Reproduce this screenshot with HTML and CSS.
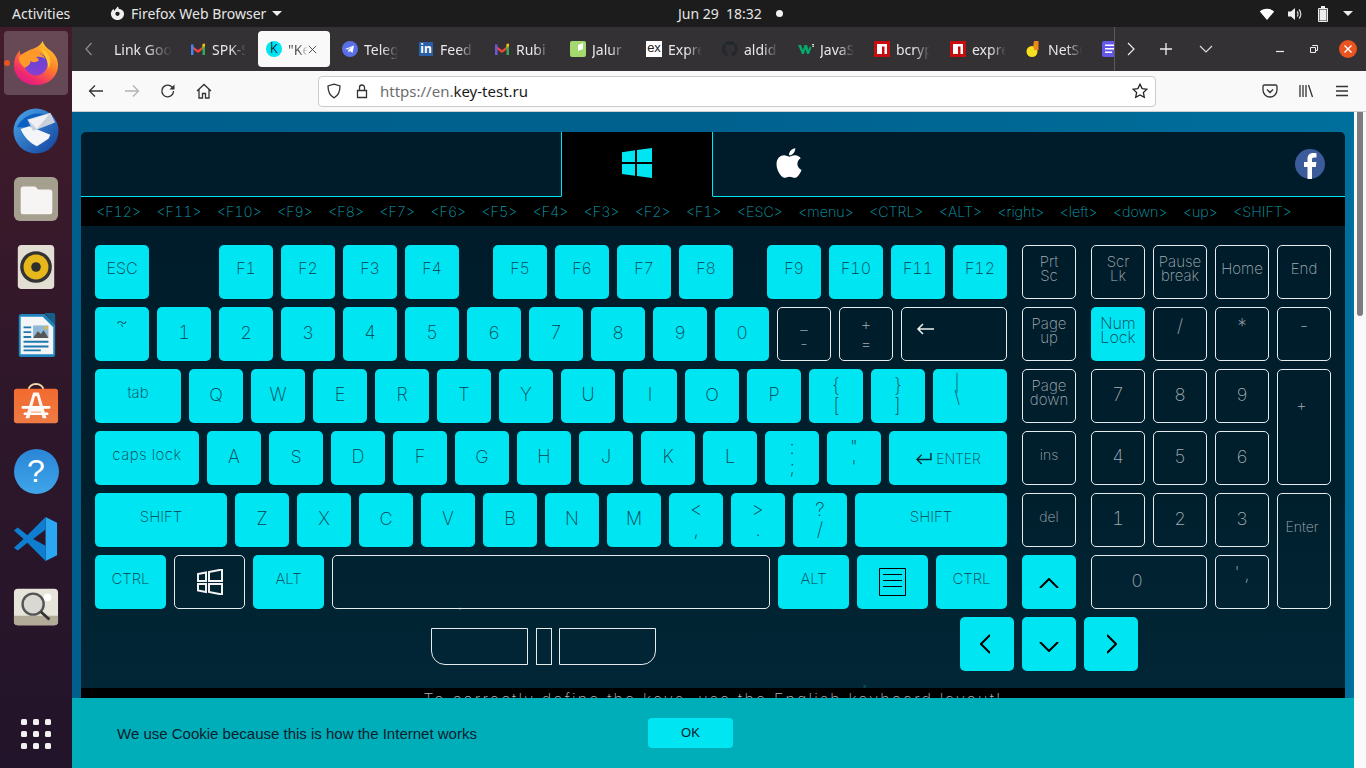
FILE: index.html
```html
<!DOCTYPE html>
<html lang="en">
<head>
<meta charset="utf-8">
<title>Keyboard test</title>
<link rel="stylesheet" href="styles.css">
</head>
<body>
<header class="topbar">
  <span class="activities">Activities</span>
  <span class="appmenu">
    <svg class="appicon" viewBox="0 0 16 16"><path fill="#eee" d="M8 .5c1 .6 1.300 1.500 1.200 2.400 3 .3 5.800 2 5.800 5.400 0 3.700-3.100 6.700-7 6.700s-7-3-7-6.700c0-2.400 1.200-4.300 3-5.500-.2 1 0 1.800.6 2.400C5.200 3.600 6.800 3 8 .5zM8 6a2.300 2.300 0 100 4.600A2.300 2.300 0 008 6z"/></svg>
    Firefox Web Browser
    <i class="caret"></i>
  </span>
  <span class="clock">Jun 29&nbsp; 18:32</span>
  <i class="clockdot"></i>
  <span class="tray">
    <svg class="trayicon" viewBox="0 0 16 16"><path fill="#fff" d="M8 14L.8 5.500C2.500 3.700 5 2.800 8 2.800s5.500.9 7.200 2.700z"/></svg>
    <svg class="trayicon" viewBox="0 0 16 16"><path fill="#eee" d="M1 5.500h3L8 2v12l-4-3.500H1z"/><path fill="none" stroke="#ddd" stroke-width="1.200" d="M10 5.500a3.500 3.500 0 010 5M12 3.500a6.500 6.500 0 010 9"/></svg>
    <svg class="trayicon" viewBox="0 0 16 16"><path fill="none" stroke="#eee" stroke-width="1" d="M3.500 2.500h9v13h-9z"/><path fill="#eee" d="M6 0h4v2H6zM4.500 3.500h7v11h-7z"/></svg>
    <i class="caret"></i>
  </span>
</header>
<div class="desk">
  <nav class="dock">
    <div class="dockitem active">
      <i class="rundot"></i>
      <svg class="dockicon" viewBox="0 0 48 48">
        <defs>
          <linearGradient id="ffa" x1="0.8" y1="0" x2="0.2" y2="1"><stop offset="0" stop-color="#ffd22e"/><stop offset="0.45" stop-color="#ff7a2a"/><stop offset="0.8" stop-color="#f0286f"/><stop offset="1" stop-color="#d9188f"/></linearGradient>
          <linearGradient id="ffb" x1="0.5" y1="0" x2="0.5" y2="1"><stop offset="0" stop-color="#5a44d8"/><stop offset="1" stop-color="#8a3fd0"/></linearGradient>
        </defs>
        <path fill="url(#ffa)" d="M31 1c1 4 4 7 8 10 5 4 8 9 8 15 0 12-10 21-23 21C11 47 1 38 1 26 1 21 3 15 7 11c0 3 1 5 3 6 2-4 6-7 11-8 4-1 8-4 10-8z"/>
        <circle cx="24" cy="25" r="12" fill="url(#ffb)"/>
        <path fill="#ff9a2a" d="M6 18c4-5 11-8 17-6 5 1 9 4 11 8-3-2-7-3-10-2 2 1 3 2 3 3-2 2-6 3-9 1 1 3-3 6-6 7-3-3-6-6-6-11z"/>
        <path fill="#ffc52e" d="M29 9c6 2 10 7 10 14 0 3-1 5-2 7 0-7-3-13-8-21z"/>
      </svg>
    </div>
    <div class="dockitem">
      <svg class="dockicon" viewBox="0 0 48 48">
        <defs><linearGradient id="tb" x1="0" y1="0" x2="1" y2="1"><stop offset="0" stop-color="#4aa8ea"/><stop offset="1" stop-color="#123f9c"/></linearGradient></defs>
        <circle cx="24" cy="24" r="23.500" fill="url(#tb)"/>
        <path fill="#0b5fc0" d="M4 20c6-12 20-18 32-12 4 2 7 6 8 10-9-4-22-3-30 2z"/>
        <path fill="#f4f5f8" d="M8 22l9-3 22 9-2 4-12 8c-7-3-14-10-17-18z"/>
        <path fill="#c9d0dc" d="M15 12l24-7 5 10-23 9z"/>
        <path fill="#eef0f5" d="M16 12.500l22-6.500-13 16z"/>
      </svg>
    </div>
    <div class="dockitem">
      <svg class="dockicon" viewBox="0 0 48 48">
        <rect x="1" y="1" width="46" height="46" rx="6" fill="#a49f8e"/>
        <path fill="#f7f5f3" d="M8 14a3 3 0 013-3h11c2 0 3 2 4 3h12a3 3 0 013 3v20a3 3 0 01-3 3H11a3 3 0 01-3-3z"/>
      </svg>
    </div>
    <div class="dockitem">
      <svg class="dockicon" viewBox="0 0 48 48">
        <rect x="5" y="1" width="38" height="46" rx="4" fill="#e2ded3"/>
        <circle cx="24" cy="24" r="16.500" fill="#333"/>
        <circle cx="24" cy="24" r="13" fill="#e7b81c"/>
        <circle cx="24" cy="24" r="5" fill="#2e2e2e"/>
      </svg>
    </div>
    <div class="dockitem">
      <svg class="dockicon" viewBox="0 0 48 48">
        <path fill="#1f86bd" d="M6 5a3 3 0 013-3h24l11 11v31a3 3 0 01-3 3H9a3 3 0 01-3-3z"/>
        <path fill="#f4f5f6" d="M8 5h23l11 11v28H8z"/>
        <path fill="#155f88" d="M33 1h9a2 2 0 012 2v11z"/>
        <path fill="#1d79ad" d="M11 15h8v2h-8zm0 5h8v2h-8zm0 5h8v2h-8zm0 5h26v2H11zm0 5h26v2H11zm0 4h18v2H11z"/>
        <rect x="21" y="14" width="16" height="13" fill="#8fb8d6"/>
        <path fill="#555" d="M21 27l5-7 3 3 3-4 5 8z"/>
        <rect x="33" y="15" width="3" height="3" fill="#e8b91f"/>
      </svg>
    </div>
    <div class="dockitem">
      <svg class="dockicon" viewBox="0 0 48 48">
        <defs><linearGradient id="sw" x1="0" y1="0" x2="0" y2="1"><stop offset="0" stop-color="#f26a2e"/><stop offset="1" stop-color="#ee7b45"/></linearGradient></defs>
        <path fill="none" stroke="#f3d6a8" stroke-width="2" d="M16 11c0-9 16-9 16 0"/>
        <rect x="1" y="9" width="46" height="36" rx="3" fill="url(#sw)"/>
        <path fill="#fff" d="M21 13h6l8 27h-4l-2-7H19l-2 7h-4zm-1 15h8l-3-11h-2z" opacity=".94"/>
        <rect x="9" y="27" width="30" height="3" rx="1" fill="#fff"/>
        <rect x="11" y="34" width="26" height="2.500" rx="1" fill="#fff"/>
      </svg>
    </div>
    <div class="dockitem">
      <div class="helpicon">?</div>
    </div>
    <div class="dockitem">
      <svg class="dockicon" viewBox="0 0 48 48">
        <path fill="#2aa7f0" d="M34 1l12 6v34l-12 6z"/>
        <path fill="#0e7fd0" d="M34 1L15 20 5 12l-4 3 10 9-10 9 4 3 10-8 19 19V31L21 24 34 14z"/>
      </svg>
    </div>
    <div class="dockitem">
      <svg class="dockicon" viewBox="0 0 48 48">
        <rect x="1" y="5" width="46" height="38" rx="4" fill="#e7e4d9"/>
        <path fill="#b1ab98" d="M1 33h46v6a4 4 0 01-4 4H5a4 4 0 01-4-4z"/>
        <circle cx="36" cy="14" r="4" fill="#fff"/>
        <circle cx="21" cy="21" r="11" fill="#d9d8d2" stroke="#555" stroke-width="2.500"/>
        <path stroke="#333" stroke-width="3" d="M29 29l9 8"/>
      </svg>
    </div>
    <div class="appgrid">
      <i></i><i></i><i></i><i></i><i></i><i></i><i></i><i></i><i></i>
    </div>
  </nav>
  <div class="browser">
    <div class="tabbar">
      <div class="tabnav"><svg class="ico16" viewBox="0 0 16 16"><path fill="none" stroke="#8b8a8c" stroke-width="1.300" d="M10.500 2L5 8l5.500 6"/></svg></div>
      <div class="tabs">
        <div class="tab"><span class="tablabel wide">Link Google</span></div>
        <div class="tab"><svg class="favicon" viewBox="0 0 16 16"><path fill="#e8453c" d="M1 4l7 5 7-5v3l-7 5-7-5z"/><path fill="#4285f4" d="M1 3.500h2.500V14H1z"/><path fill="#34a853" d="M12.500 3.500H15V14h-2.500z"/><path fill="#fbbc04" d="M12.500 3l2.500-.5V5l-2.500 2z"/></svg><span class="tablabel">SPK-SPK</span></div>
        <div class="tab current"><span class="kfav">k</span><span class="tablabel short">"Key</span><svg class="tabclose" viewBox="0 0 12 12"><path stroke="#444" stroke-width="1" d="M2 2l8 8M10 2l-8 8"/></svg></div>
        <div class="tab"><svg class="favicon" viewBox="0 0 16 16"><circle cx="8" cy="8" r="8" fill="#5a6fe6"/><path fill="#fff" d="M3 8l9-3.500-1.500 7.500-2.500-2-1.500 1.500-.3-2.500 4-3-5 2.500z"/></svg><span class="tablabel">Telegram</span></div>
        <div class="tab"><span class="infav">in</span><span class="tablabel">Feed</span></div>
        <div class="tab"><svg class="favicon" viewBox="0 0 16 16"><path fill="#e8453c" d="M1 4l7 5 7-5v3l-7 5-7-5z"/><path fill="#6a5ad4" d="M1 3.500h2.500V14H1z"/><path fill="#34a853" d="M12.500 3.500H15V14h-2.500z"/><path fill="#fbbc04" d="M12.500 3l2.500-.5V5l-2.500 2z"/></svg><span class="tablabel">Rubi</span></div>
        <div class="tab"><svg class="favicon" viewBox="0 0 16 16"><rect width="16" height="16" rx="2" fill="#a5d96f"/><path fill="#fff" d="M3 15V9l5-2v3l5-2V2l-5 2v3l-5 2z"/></svg><span class="tablabel">Jalur</span></div>
        <div class="tab"><span class="exfav">ex</span><span class="tablabel">Express</span></div>
        <div class="tab"><svg class="favicon" viewBox="0 0 16 16"><path fill="#22282d" d="M8 0a8 8 0 00-2.500 15.600c.4.1.5-.2.5-.4v-1.400c-2.200.5-2.700-1-2.700-1-.4-.9-.9-1.200-.9-1.200-.7-.5.100-.5.100-.5.800.1 1.200.8 1.200.8.700 1.200 1.900.9 2.300.7.100-.5.300-.9.500-1.100-1.800-.2-3.600-.9-3.600-4 0-.9.300-1.600.8-2.100-.1-.2-.4-1 .1-2.100 0 0 .7-.2 2.200.8a7.600 7.600 0 014 0c1.500-1 2.200-.8 2.200-.8.500 1.100.2 1.900.1 2.100.5.600.8 1.300.8 2.100 0 3.100-1.900 3.700-3.600 3.900.3.200.5.700.5 1.500v2.200c0 .2.100.5.600.4A8 8 0 008 0z"/></svg><span class="tablabel">aldid</span></div>
        <div class="tab"><svg class="favicon" viewBox="0 0 16 16"><path fill="#04aa6d" d="M0 4h3l2 5 1.500-5h2.500l1.500 5 1.300-3.500 1.700 1L11 13H9L7.500 8 6 13H4z"/><path fill="#ddd" d="M14 3h2v1l-1 .5 1 .5v1h-2v-.5h1.300L14.500 5v-.5l.8-.5H14z"/></svg><span class="tablabel">JavaScript</span></div>
        <div class="tab"><svg class="favicon" viewBox="0 0 16 16"><rect width="16" height="16" fill="#c70d0d"/><path fill="#fff" d="M3 3h10v10h-2.500V5.500H8V13H3z"/></svg><span class="tablabel">bcrypt</span></div>
        <div class="tab"><svg class="favicon" viewBox="0 0 16 16"><rect width="16" height="16" fill="#c70d0d"/><path fill="#fff" d="M3 3h10v10h-2.500V5.500H8V13H3z"/></svg><span class="tablabel">express</span></div>
        <div class="tab"><svg class="favicon" viewBox="0 0 16 16"><circle cx="6" cy="10.500" r="5.500" fill="#f5e01f"/><path fill="#ef8a1a" d="M8 0h4.500v9H8c0-2 0-2-1-3z"/></svg><span class="tablabel">NetSuite</span></div>
        <div class="tab"><svg class="favicon" viewBox="0 0 16 16"><rect width="16" height="16" rx="2" fill="#6358ea"/><path fill="#fff" d="M3 3.500h10V5H3zm0 3.500h10v1.500H3zm0 3.500h7V12H3z"/></svg><span class="tablabel">Docs</span></div>
      </div>
      <div class="tabnav next"><svg class="ico16" viewBox="0 0 16 16"><path fill="none" stroke="#eee" stroke-width="1.200" d="M5 2l6 6-6 6"/></svg></div>
      <div class="tabnav plus"><svg class="ico16" viewBox="0 0 16 16"><path stroke="#eee" stroke-width="1.300" d="M8 2v12M2 8h12"/></svg></div>
      <div class="tabnav more"><svg class="ico16" viewBox="0 0 16 16"><path fill="none" stroke="#ddd" stroke-width="1.200" d="M2 5l6 6 6-6"/></svg></div>
      <div class="winctl">
        <div class="winbtn"><svg class="ico16" viewBox="0 0 16 16"><path stroke="#eee" stroke-width="1.200" d="M4 10.500h8"/></svg></div>
        <div class="winbtn"><svg class="ico16" viewBox="0 0 16 16"><path fill="none" stroke="#eee" d="M4.500 6.500h5v5h-5zM6.500 5V4.500h5v5H10"/></svg></div>
        <div class="winbtn"><svg class="closebtn" viewBox="0 0 18 18"><circle cx="9" cy="9" r="9" fill="#e95420"/><path stroke="#fff" stroke-width="1.400" d="M5.500 5.500l7 7M12.500 5.500l-7 7"/></svg></div>
      </div>
    </div>
    <div class="toolbar">
      <div class="tool"><svg class="ico16" viewBox="0 0 16 16"><path fill="none" stroke="#333" stroke-width="1.300" d="M15 8H1.500M7 2.500L1.500 8 7 13.500"/></svg></div>
      <div class="tool"><svg class="ico16" viewBox="0 0 16 16"><path fill="none" stroke="#b3b3b3" stroke-width="1.300" d="M1 8h13.500M9 2.500L14.500 8 9 13.500"/></svg></div>
      <div class="tool"><svg class="ico16" viewBox="0 0 16 16"><path fill="none" stroke="#333" stroke-width="1.300" d="M13.500 8A5.800 5.800 0 112 7a5.800 5.800 0 0110-3l1.500 2"/><path fill="#333" d="M14.500 1.500v5h-5z"/></svg></div>
      <div class="tool"><svg class="ico16" viewBox="0 0 16 16"><path fill="none" stroke="#333" stroke-width="1.300" d="M1 8l7-6.500L15 8M3 6.500V15h3.500v-4.500h3V15H13V6.500"/></svg></div>
      <div class="urlbar">
        <svg class="ico16" viewBox="0 0 16 16"><path fill="none" stroke="#333" stroke-width="1.300" d="M8 1.200l6 1.800c0 6-1.500 9.500-6 11.800C3.500 12.500 2 9 2 3z"/></svg>
        <svg class="ico16 lock" viewBox="0 0 16 16"><path fill="none" stroke="#333" stroke-width="1.300" d="M3.500 7.500h9v7h-9zM5.500 7.500V4.500a2.500 2.500 0 015 0v3"/></svg>
        <span class="url"><span class="urlmuted">https://en.</span>key-test.ru</span>
        <svg class="ico16 star" viewBox="0 0 16 16"><path fill="none" stroke="#222" stroke-width="1.300" d="M8 1.200l2.100 4.400 4.800.6-3.500 3.300.9 4.800L8 12l-4.300 2.300.9-4.800L1.100 6.200l4.800-.6z"/></svg>
      </div>
      <div class="toolend">
        <div class="tool"><svg class="ico16" viewBox="0 0 16 16"><path fill="none" stroke="#333" stroke-width="1.300" d="M2.500 2h11A1.500 1.500 0 0115 3.500V7a7 7 0 01-14 0V3.500A1.500 1.500 0 012.500 2zM5 6.500L8 9.500l3-3"/></svg></div>
        <div class="tool"><svg class="ico16" viewBox="0 0 16 16"><path fill="none" stroke="#333" stroke-width="1.300" d="M2 2v12M5 2v12M8 2v12M10.500 2l4 12"/></svg></div>
        <div class="tool"><svg class="ico16" viewBox="0 0 16 16"><path stroke="#333" stroke-width="1.300" d="M2 3.500h12M2 8h12M2 12.500h12"/></svg></div>
      </div>
    </div>
    <div class="page">
      <main class="site">
        <section class="panel">
          <div class="oshead">
            <div class="ostab">
              <svg class="winlogo" viewBox="0 0 30 30"><path fill="#00e5f2" d="M0 4.200L13 2.300v11.800H0zM15 2l15-2v14.100H15zM0 15.900h13v11.900L0 25.900zM15 15.900h15V30l-15-2.100z"/></svg>
            </div>
            <div class="ostab mac">
              <svg class="applelogo" viewBox="0 0 384 512"><path fill="#fff" d="M318.700 268.700c-.2-36.700 16.400-64.400 50-84.800-18.800-26.900-47.200-41.700-84.700-44.600-35.500-2.800-74.300 20.700-88.500 20.700-15 0-49.400-19.700-76.400-19.700C63.300 141.200 4 184.800 4 273.500q0 39.300 14.400 81.200c12.800 36.700 59 126.700 107.200 125.200 25.200-.6 43-17.900 75.800-17.900 31.800 0 48.300 17.900 76.400 17.900 48.600-.7 90.400-82.500 102.600-119.300-65.200-30.700-61.700-90-61.700-91.900zm-56.600-164.200c27.300-32.400 24.800-61.900 24-72.500-24.100 1.400-52 16.400-67.900 34.900-17.500 19.800-27.800 44.300-25.600 71.900 26.100 2 49.900-11.400 69.500-34.300z"/></svg>
            </div>
            <svg class="fblogo" viewBox="0 0 30 30"><circle cx="15" cy="15" r="15" fill="#3b5b9b"/><path fill="#fff" d="M12.500 30V18H9v-5h3.500V10c0-4 2.300-6 5.800-6 1.500 0 2.700.1 3.200.2v4.200h-2.300c-1.800 0-2.200.9-2.200 2.200V13h4.400l-.6 5h-3.800v12z"/></svg>
          </div>
          <div class="keylog">
            <span>&lt;F12&gt;</span><span>&lt;F11&gt;</span><span>&lt;F10&gt;</span><span>&lt;F9&gt;</span><span>&lt;F8&gt;</span><span>&lt;F7&gt;</span><span>&lt;F6&gt;</span><span>&lt;F5&gt;</span><span>&lt;F4&gt;</span><span>&lt;F3&gt;</span><span>&lt;F2&gt;</span><span>&lt;F1&gt;</span><span>&lt;ESC&gt;</span><span>&lt;menu&gt;</span><span>&lt;CTRL&gt;</span><span>&lt;ALT&gt;</span><span>&lt;right&gt;</span><span>&lt;left&gt;</span><span>&lt;down&gt;</span><span>&lt;up&gt;</span><span>&lt;SHIFT&gt;</span>
          </div>
          <div class="keyboard">
            <div class="kbtop">
              <div class="main">
                <div class="row">
                  <div class="key on small">ESC</div>
                  <div class="key on small gapf1">F1</div><div class="key on small">F2</div><div class="key on small">F3</div><div class="key on small">F4</div>
                  <div class="key on small gapf">F5</div><div class="key on small">F6</div><div class="key on small">F7</div><div class="key on small">F8</div>
                  <div class="key on small gapf">F9</div><div class="key on small">F10</div><div class="key on small">F11</div><div class="key on small">F12</div>
                </div>
                <div class="row">
                  <div class="key on sym tilde">~<br>`</div>
                  <div class="key on">1</div><div class="key on">2</div><div class="key on">3</div><div class="key on">4</div><div class="key on">5</div><div class="key on">6</div><div class="key on">7</div><div class="key on">8</div><div class="key on">9</div><div class="key on">0</div>
                  <div class="key off sym">_<br>-</div><div class="key off sym">+<br>=</div>
                  <div class="key off grow">
                    <svg class="backarrow" viewBox="0 0 18 12"><path fill="none" stroke="#eee" stroke-width="1.500" d="M18 6H2M7 1L2 6l5 5"/></svg>
                  </div>
                </div>
                <div class="row">
                  <div class="key on word w86">tab</div>
                  <div class="key on">Q</div><div class="key on">W</div><div class="key on">E</div><div class="key on">R</div><div class="key on">T</div><div class="key on">Y</div><div class="key on">U</div><div class="key on">I</div><div class="key on">O</div><div class="key on">P</div>
                  <div class="key on sym">{<br>[</div><div class="key on sym">}<br>]</div><div class="key on sym grow pipe">|<br>\</div>
                </div>
                <div class="row">
                  <div class="key on word wide w104">caps lock</div>
                  <div class="key on">A</div><div class="key on">S</div><div class="key on">D</div><div class="key on">F</div><div class="key on">G</div><div class="key on">H</div><div class="key on">J</div><div class="key on">K</div><div class="key on">L</div>
                  <div class="key on sym">:<br>;</div><div class="key on sym">"<br>'</div>
                  <div class="key on word grow entermain"><svg class="enterarrow" viewBox="0 0 18 14"><path fill="none" stroke="#032a33" stroke-width="1.500" d="M17 1v7H2M7 3L2 8l5 5"/></svg>ENTER</div>
                </div>
                <div class="row">
                  <div class="key on word w132">SHIFT</div>
                  <div class="key on">Z</div><div class="key on">X</div><div class="key on">C</div><div class="key on">V</div><div class="key on">B</div><div class="key on">N</div><div class="key on">M</div>
                  <div class="key on sym">&lt;<br>,</div><div class="key on sym">&gt;<br>.</div><div class="key on sym">?<br>/</div>
                  <div class="key on word grow">SHIFT</div>
                </div>
                <div class="row">
                  <div class="key on word w71">CTRL</div>
                  <div class="key off w71 icon"><svg class="winoutline" viewBox="0 0 26 26"><path fill="none" stroke="#f2f2f2" stroke-width="2" d="M1 5l8-1.500v8.500H1zM12 3l13-2.500V12H12zM1 15h8v8l-8-1.500zM12 15h13v10.500L12 23z"/></svg></div>
                  <div class="key on word w71">ALT</div>
                  <div class="key off grow"></div>
                  <div class="key on word w71">ALT</div>
                  <div class="key on w71 icon"><svg class="menuicon" viewBox="0 0 27 28"><path fill="none" stroke="#000" d="M.5.500h26v27H.5zM4 6.500h19M4 12.500h19M4 18.500h19"/></svg></div>
                  <div class="key on word w71">CTRL</div>
                </div>
              </div>
              <div class="mid">
                <div class="key off two small">Prt<br>Sc</div>
                <div class="key off two small">Page<br>up</div>
                <div class="key off two small">Page<br>down</div>
                <div class="key off word">ins</div>
                <div class="key off word">del</div>
                <div class="key on icon"><svg class="chev up" viewBox="0 0 20 10"><path fill="none" stroke="#000" stroke-width="2" d="M1 10l9-9 9 9"/></svg></div>
              </div>
              <div class="num">
                <div class="key off two small">Scr<br>Lk</div>
                <div class="key off two small">Pause<br>break</div>
                <div class="key off small">Home</div>
                <div class="key off small">End</div>
                <div class="key on two small">Num<br>Lock</div>
                <div class="key off top">/</div>
                <div class="key off top">*</div>
                <div class="key off top">-</div>
                <div class="key off">7</div><div class="key off">8</div><div class="key off">9</div>
                <div class="key off tall plusnum">+</div>
                <div class="key off">4</div><div class="key off">5</div><div class="key off">6</div>
                <div class="key off">1</div><div class="key off">2</div><div class="key off">3</div>
                <div class="key off tall enternum">Enter</div>
                <div class="key off span2 zero">0</div>
                <div class="key off top">' ,</div>
              </div>
            </div>
            <div class="kbbottom">
              <div class="mouse">
                <div class="mbtn left"></div>
                <div class="mbtn wheel"></div>
                <div class="mbtn right"></div>
              </div>
              <div class="arrows">
                <div class="key on icon"><svg class="chevv lf" viewBox="0 0 10 20"><path fill="none" stroke="#000" stroke-width="2" d="M10 1L1 10l9 9"/></svg></div>
                <div class="key on icon"><svg class="chev down" viewBox="0 0 20 10"><path fill="none" stroke="#000" stroke-width="2" d="M1 0l9 9 9-9"/></svg></div>
                <div class="key on icon"><svg class="chevv rt" viewBox="0 0 10 20"><path fill="none" stroke="#000" stroke-width="2" d="M0 1l9 9-9 9"/></svg></div>
              </div>
            </div>
          </div>
          <div class="notice">To correctly define the keys, use the English keyboard layout!</div>
        </section>
      </main>
      <aside class="gutter"><div class="thumb"></div></aside>
      <div class="cookie">
        <span class="cookietext">We use Cookie because this is how the Internet works</span>
        <span class="cookiebtn">OK</span>
      </div>
    </div>
  </div>
</div>
</body>
</html>
```
FILE: styles.css
```css
* { box-sizing: border-box; }
html, body { margin: 0; padding: 0; }
body {
  width: 1366px;
  height: 768px;
  overflow: hidden;
  display: flex;
  flex-direction: column;
  background: #1d1d1d;
  font-family: "Noto Sans", sans-serif;
}
i { display: block; }
svg { display: block; flex: none; }

/* top bar */
.topbar {
  height: 27px;
  flex: none;
  background: #1c1c1c;
  color: #e6e6e6;
  font-size: 14px;
  display: flex;
  align-items: center;
  padding-left: 12px;
}
.activities { width: 62px; }
.appmenu { display: flex; align-items: center; gap: 6px; margin-left: 36px; width: 176px; }
.appicon { width: 15px; height: 15px; }
.caret {
  width: 0; height: 0;
  border-left: 5px solid transparent;
  border-right: 5px solid transparent;
  border-top: 5px solid #eee;
}
.clock { margin-left: 392px; width: 92px; }
.clockdot { width: 7px; height: 7px; border-radius: 50%; background: #f2f2f2; margin-left: 6px; }
.tray { margin-left: auto; display: flex; align-items: center; gap: 12px; padding-right: 13px; }
.trayicon { width: 16px; height: 16px; }

/* dock */
.desk { flex: 1; display: flex; min-height: 0; }
.dock {
  width: 72px;
  flex: none;
  background: linear-gradient(180deg, #421c2b 0%, #30172a 45%, #22142a 100%);
  padding: 4px 4px 19px;
  display: flex;
  flex-direction: column;
  gap: 4px;
}
.dockitem {
  height: 64px;
  flex: none;
  border-radius: 4px;
  display: flex;
  align-items: center;
  justify-content: center;
  position: relative;
}
.dockitem.active { background: rgba(255,255,255,.2); }
.rundot {
  position: absolute;
  left: 0; top: 29px;
  width: 6px; height: 6px;
  border-radius: 50%;
  background: #e95420;
}
.dockicon { width: 46px; height: 46px; }
.helpicon {
  width: 45px; height: 45px;
  border-radius: 50%;
  background: linear-gradient(180deg, #2a86d8, #3fa5e8);
  color: #fff;
  font-size: 32px;
  line-height: 45px;
  text-align: center;
  font-family: "Liberation Sans", sans-serif;
}
.appgrid {
  margin-top: auto;
  align-self: center;
  display: grid;
  grid-template-columns: repeat(3, 6px);
  gap: 6px;
}
.appgrid i { width: 6px; height: 6px; border-radius: 1.500px; background: #f1f1f1; }

/* browser */
.browser { flex: 1; min-width: 0; display: flex; flex-direction: column; position: relative; }
.tabbar { height: 44px; flex: none; background: #333133; display: flex; align-items: center; }
.tabnav { width: 34px; height: 44px; display: flex; align-items: center; justify-content: center; flex: none; }
.tabnav.next { width: 32px; }
.tabnav.plus { width: 38px; }
.tabnav.more { width: 42px; }
.ico16 { width: 16px; height: 16px; }
.tabs {
  width: 1009px;
  height: 44px;
  flex: none;
  overflow: hidden;
  display: flex;
  align-items: center;
  border-right: 1px solid #5b5a5c;
}
.tab {
  width: 72px;
  height: 36px;
  margin-right: 4px;
  flex: none;
  border-radius: 4px;
  display: flex;
  align-items: center;
  gap: 6px;
  padding-left: 8px;
  color: #e8e8e8;
  font-size: 14px;
}
.tab.current { background: #f9f9fa; color: #555; position: relative; }
.tablabel {
  width: 34px;
  overflow: hidden;
  white-space: nowrap;
  -webkit-mask-image: linear-gradient(90deg, #000 55%, transparent 100%);
  mask-image: linear-gradient(90deg, #000 55%, transparent 100%);
}
.tablabel.wide { width: 58px; }
.tablabel.short { width: 20px; }
.favicon { width: 16px; height: 16px; flex: none; }
.kfav {
  width: 16px; height: 16px; flex: none;
  border-radius: 50%;
  background: #00e5f2;
  color: #123;
  font-size: 15px;
  line-height: 14px;
  text-align: center;
  font-family: "Inter", sans-serif;
  font-weight: 300;
}
.infav {
  width: 14px; height: 14px; flex: none; margin: 0 1px;
  background: #2a5fa8;
  color: #fff;
  font-size: 12px;
  line-height: 14px;
  font-weight: 700;
  text-align: center;
}
.exfav {
  width: 16px; height: 16px; flex: none;
  background: #fff;
  color: #222;
  font-size: 13px;
  line-height: 14px;
  text-align: center;
  font-family: "Liberation Sans", sans-serif;
}
.tabclose { width: 11px; height: 11px; margin-left: -7px; }
.winctl { margin-left: auto; padding-right: 1px; display: flex; }
.winbtn { width: 34px; height: 44px; display: flex; align-items: center; justify-content: center; }
.closebtn { width: 18px; height: 18px; }

/* toolbar */
.toolbar {
  height: 41px;
  flex: none;
  background: #f9f9fa;
  border-bottom: 1px solid #cfcfd0;
  display: flex;
  align-items: center;
  padding: 0 6px;
}
.tool { width: 36px; height: 36px; display: flex; align-items: center; justify-content: center; flex: none; }
.tool:nth-child(4) { width: 35px; }
.urlbar {
  margin-left: 97px;
  width: 838px;
  height: 31px;
  flex: none;
  background: #fff;
  border: 1px solid #cbcbcc;
  border-radius: 4px;
  display: flex;
  align-items: center;
  padding: 0 7px;
}
.lock { margin-left: 12px; }
.url { margin-left: 10px; font-size: 15px; color: #1a1a1a; }
.urlmuted { color: #6e6e70; }
.star { margin-left: auto; }
.toolend { margin-left: auto; display: flex; }
.toolend .tool { width: 36px; }

/* page */
.page { flex: 1; min-height: 0; display: flex; position: relative; }
.site {
  flex: 1;
  min-width: 0;
  padding: 20px 9px 0;
  overflow: hidden;
  background: linear-gradient(90deg, #005f8c 0%, #00618f 50%, #006f9c 100%);
}
.gutter { width: 12px; flex: none; background: #f9f9fa; padding: 0 3px; }
.thumb { width: 6px; height: 204px; background: #7c7c7c; border-radius: 0 0 3px 3px; }

.panel {
  border-radius: 5px 5px 0 0;
  overflow: hidden;
  background-color: #001c2a;
  background-image:
    radial-gradient(circle at 30% 80%, #0a4a55 0, #0a4a55 1px, transparent 2px),
    radial-gradient(circle at 62% 93%, #0a4a55 0, #0a4a55 1px, transparent 2px),
    linear-gradient(180deg, #001b29 0%, #001f2d 60%, #022838 100%);
}
.oshead { height: 65px; position: relative; display: flex; border-bottom: 1px solid #00e5f2; padding-left: 480px; }
.ostab {
  width: 152px;
  height: 65px;
  flex: none;
  background: #000;
  border-left: 1px solid #00e5f2;
  border-right: 1px solid #00e5f2;
  border-bottom: 1px solid #000;
  display: flex;
  align-items: center;
  justify-content: center;
}
.ostab.mac { background: transparent; border: 0; }
.winlogo { width: 30px; height: 30px; margin-top: -2px; }
.applelogo { width: 26px; height: 34px; margin-top: -4px; }
.fblogo { width: 30px; height: 30px; position: absolute; left: 1214px; top: 17px; }
.keylog {
  height: 29px;
  background: #000;
  display: flex;
  gap: 15px;
  padding-left: 15px;
  align-items: center;
  color: #0ca0b3;
  font-family: "Inter", sans-serif;
  font-weight: 200;
  font-size: 14.300px;
  font-variant-numeric: tabular-nums;
  white-space: nowrap;
}

/* keyboard */
.keyboard { padding: 19px 14px 17px; display: flex; flex-direction: column; gap: 8px; }
.kbtop { display: flex; gap: 15px; }
.main { width: 912px; flex: none; display: flex; flex-direction: column; gap: 8px; }
.row { display: flex; gap: 8px; }
.mid { display: flex; flex-direction: column; gap: 8px; width: 54px; flex: none; }
.num { display: grid; grid-template-columns: repeat(4, 54px); grid-auto-rows: 54px; gap: 8px; flex: none; }

.key {
  width: 54px;
  height: 54px;
  flex: none;
  border-radius: 5px;
  padding-top: 16px;
  text-align: center;
  font-family: "Inter", sans-serif;
  font-weight: 200;
  font-size: 18px;
  line-height: 20px;
  font-variant-numeric: tabular-nums;
}
.key.on { background: #00e5f2; color: #043f50; }
.key.off { border: 1px solid #e6ecee; color: #a3adb3; padding-top: 15px; }
.key.small { font-size: 16px; padding-top: 16px; line-height: 14px; }
.key.off.small { padding-top: 16px; font-size: 15px; }
.key.word { font-size: 15px; line-height: 16px; padding-top: 16px; }
.key.word.wide { letter-spacing: .5px; }
.key.off.word { padding-top: 15px; font-size: 14px; }
.key.two, .key.off.two { padding-top: 9px; line-height: 14px; }
.key.sym { padding-top: 7px; line-height: 20px; font-size: 19px; }
.key.sym.tilde { padding-top: 9px; line-height: 11px; }
.key.sym.pipe { padding: 7px 26px 0 0; line-height: 14px; font-size: 17px; }
.key.off.sym { padding-top: 6px; font-size: 17px; }
.key.top { padding-top: 8px; }
.key.icon { padding: 0; display: flex; align-items: center; justify-content: center; }
.grow { flex: 1; width: auto; }
.gapf1 { margin-left: 62px; }
.gapf { margin-left: 26px; }
.w71 { width: 71px; }
.w86 { width: 86px; }
.w104 { width: 104px; }
.w132 { width: 132px; }
.backarrow { width: 18px; height: 12px; margin: 0 0 0 14px; }
.key.entermain { display: flex; justify-content: center; gap: 4px; padding-top: 20px; font-size: 14px; }
.enterarrow { width: 17px; height: 13px; margin-top: 1px; }
.tall { grid-row: span 2; height: 116px; }
.key.plusnum { grid-column: 4; grid-row: 3 / span 2; padding: 25px 5px 0 0; font-size: 16px; }
.key.enternum { grid-column: 4; grid-row: 5 / span 2; padding: 23px 4px 0 0; font-size: 14px; }
.span2 { grid-column: span 2; width: 116px; }
.zero { padding-right: 24px; }
.winoutline { width: 26px; height: 26px; }
.menuicon { width: 27px; height: 28px; }
.chev { width: 20px; height: 10px; }
.chev.up { margin-top: 2px; }
.chev.down { margin-top: 6px; }
.chevv { width: 10px; height: 20px; }
.chevv.lf { margin-right: 4px; }
.chevv.rt { margin-left: 2px; }

.kbbottom { display: flex; height: 54px; }
.mouse { display: flex; gap: 8px; margin-left: 336px; margin-top: 11px; width: 225px; height: 37px; }
.mbtn { border: 1px solid #e6ecee; height: 37px; }
.mbtn.left { width: 97px; border-bottom-left-radius: 14px; }
.mbtn.wheel { width: 16px; margin-right: -1px; }
.mbtn.right { width: 97px; border-bottom-right-radius: 14px; }
.arrows { display: flex; gap: 8px; margin-left: 304px; }

.notice {
  background: #000;
  height: 40px;
  padding-top: 1px;
  text-align: center;
  color: #a9b4ba;
  font-family: "Inter", sans-serif;
  font-weight: 200;
  font-size: 16px;
  letter-spacing: 2.130px;
  white-space: nowrap;
}

/* cookie */
.cookie {
  position: absolute;
  left: 0;
  right: 12px;
  bottom: 0;
  height: 70px;
  background: #00aeba;
  display: flex;
  align-items: center;
  padding-left: 45px;
  font-family: "Liberation Sans", sans-serif;
  color: #06202c;
}
.cookietext { font-size: 15px; width: 531px; }
.cookiebtn {
  width: 85px;
  height: 30px;
  background: #00e5f2;
  border-radius: 4px;
  font-size: 13px;
  line-height: 30px;
  text-align: center;
}
```
